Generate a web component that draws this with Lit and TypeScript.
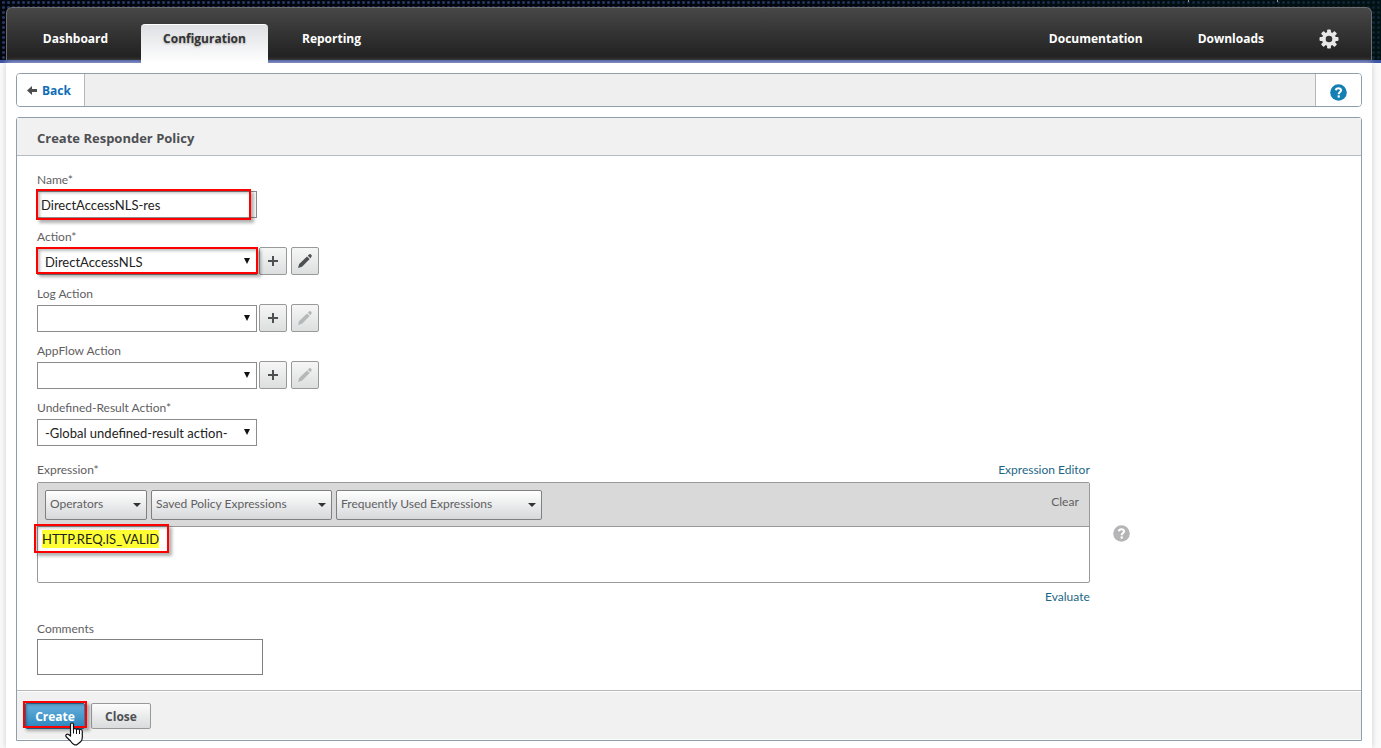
import { LitElement, html, css, svg, nothing } from "lit";
import { customElement, state } from "lit/decorators.js";

const plusIcon = html`<svg width="12" height="12" viewBox="0 0 12 12" aria-hidden="true"><path d="M5 1h2v4h4v2H7v4H5V7H1V5h4z" fill="#4d4f53" /></svg>`;
const pencilIcon = html`<svg width="16" height="16" viewBox="0 0 16 16" aria-hidden="true"><path d="M1 15l1.200-4L10 3.400l2.700 2.700L5 13.800z" fill="currentColor" /><path d="M10.800 2.700l1.200-1.100q1.100-1 2.200.1t.1 2.200L13.400 5.200z" fill="currentColor" /></svg>`;
const gearIcon = html`<svg width="20" height="20" viewBox="-10 -10 20 20" aria-hidden="true">
  <g fill="#e8e8e8">${[0, 45, 90, 135].map((a) => svg`<rect x="-1.900" y="-9.500" width="3.800" height="19" rx=".8" transform="rotate(${a})" />`)}<circle r="7" /></g>
  <circle r="3.300" fill="#333" />
</svg>`;
const helpIcon = html`<svg width="17" height="17" viewBox="0 0 17 17" aria-hidden="true">
  <circle cx="8.500" cy="8.500" r="8.300" fill="currentColor" />
  <path d="M5.800 6.200Q6.200 4.200 8.500 4.200T11.100 6.300C11.100 8 8.700 8.100 8.700 10.200" fill="none" stroke="#fff" stroke-width="2.100" />
  <rect x="7.600" y="11.400" width="2.200" height="2.200" fill="#fff" />
</svg>`;
const backIcon = html`<svg width="10" height="10" viewBox="0 0 10 10" aria-hidden="true"><path d="M0 4.500L5 0v3h5v3H5v3z" fill="#4d4d4d" /></svg>`;
const handIcon = html`<svg class="cursor" width="19" height="24" viewBox="0 0 19 24" aria-hidden="true">
  <path d="M5.500 2.500a1.500 1.500 0 0 1 3 0V7.500q0-1 1.400-1t1.600 1.400q0-1 1.500-1t1.500 1.400q0-.8 1.300-.8t1.500 1.700V15.500q0 2.500-1.500 4t-4 3.300H9.500Q7 21.500 5.500 19L1.400 15q-1.200-1.800 0-2.600t2.600.3l1.500 1.300z" fill="#fff" stroke="#111" stroke-width="1.200" stroke-linejoin="round" />
  <path d="M8.500 7v4.500M11.500 8V12M14.500 8.500V12" stroke="#111" fill="none" />
</svg>`;

interface Field {
  id: string;
  label: string;
  value: string;
  tools: boolean;
  editable?: boolean;
  marked?: boolean;
}

@customElement("app-root")
export class AppRoot extends LitElement {
  static styles = css`
    :host {
      display: block;
      min-height: 100vh;
      background: #fafafa;
      color: #5f6062;
      font: 12px/18px Lato, "Open Sans", sans-serif;
    }
    *, *::before, *::after { box-sizing: border-box; }
    svg { display: block; flex: none; }
    a { color: #1c6785; text-decoration: none; }
    button, input, select, textarea { font: inherit; margin: 0; }
    .top {
      padding: 7px 9px 0 6px;
      border-bottom: 3px solid #3c53a6;
      background-color: #04060d;
      background-clip: padding-box, padding-box, padding-box, padding-box;
      background-image:
        linear-gradient(#999, #999),
        linear-gradient(#999, #999),
        linear-gradient(90deg, rgba(4, 6, 13, 0) 50%, rgba(0, 24, 22, 0.6)),
        radial-gradient(circle, #22365f 1px, transparent 2px);
      background-position: right 192px top, right 103px top, 0 0, 1px 0;
      background-size: 1px 2px, 1px 2px, auto, 5px 5px;
      background-repeat: no-repeat, no-repeat, no-repeat, repeat;
    }
    .nav {
      display: flex;
      height: 53px;
      padding: 0 32px 0 5px;
      border: 1px solid #6e6e6e;
      border-bottom: 0;
      border-radius: 6px 6px 0 0;
      background: linear-gradient(#474747, #1f1f1f);
      align-items: flex-end;
    }
    .tab, .links a, .title, .back, .btn { font-family: "Open Sans", sans-serif; font-weight: 700; }
    .tab {
      height: 36px;
      padding-top: 6px;
      width: 127px;
      text-align: center;
      color: #fff;
      font-size: 12px;
    }
    .tab.active {
      height: 39px;
      margin: 0 0 -3px 2px;
      padding-top: 5px;
      border-radius: 4px 4px 0 0;
      color: #333;
      background: linear-gradient(#dfe0e4, #fff);
      border-top: 1px solid #fff;
      text-shadow: 0 1px 2px #aaa;
    }
    .spacer { flex: 1; }
    .links { display: flex; gap: 55px; align-items: center; height: 36px; padding-bottom: 6px; }
    .links a { color: #fff; }
    .icon-btn { border: 0; padding: 0; background: none; }
    .page {
      margin: 0 9px 0 6px;
      padding: 10px 10px 7px;
      background: #fff;
      box-shadow: 0 0 6px #ccc;
    }
    .crumbs {
      display: flex;
      height: 34px;
      border: 1px solid #909daa;
      border-radius: 4px;
      background: #efefef;
      overflow: hidden;
    }
    .back {
      display: flex;
      align-items: center;
      gap: 5px;
      width: 68px;
      padding: 2px 0 0 10px;
      background: #fff;
      border-right: 1px solid #b8b8b8;
      color: #0f6db8;
    }
    .help {
      width: 46px;
      background: #fff;
      border: 0;
      border-left: 1px solid #b8b8b8;
      color: #147fb3;
      display: flex;
      align-items: center;
      justify-content: center;
      padding: 4px 0 0;
    }
    .panel { margin-top: 10px; border: 1px solid #909daa; border-radius: 3px 3px 0 0; }
    .title {
      margin: 0;
      height: 38px;
      padding: 0 20px;
      font-size: 13px;
      line-height: 41px;
      color: #4d4f53;
      background: #f1f1f1;
      border-bottom: 1px solid #b5bbc0;
    }
    .form { padding: 15px 8px 15px 20px; }
    .field { margin-bottom: 10px; }
    .field label, .label { display: block; height: 18px; margin-bottom: 1px; }
    .row { display: flex; align-items: flex-end; gap: 4px; height: 28px; }
    .control { position: relative; width: 220px; height: 27px; }
    .control select, .control input {
      width: 100%;
      height: 100%;
      border: 1px solid #8c8c8c;
      border-radius: 0;
      color: #222;
      background: #fff;
      font-size: 13px;
      appearance: none;
    }
    .control input { padding: 0 3px; }
    .control select { padding: 1px 7px 0; }
    .arrow::after {
      content: "";
      position: absolute;
      right: 7px;
      top: 10px;
      border: 3px solid transparent;
      border-top: 6px solid #111;
      border-bottom: 0;
      pointer-events: none;
    }
    .mini {
      display: flex;
      align-items: center;
      justify-content: center;
      width: 28px;
      height: 28px;
      padding: 0;
      border: 1px solid #999;
      border-radius: 2px;
      background: linear-gradient(#f6f6f6, #dcdfdf);
      color: #4d4f53;
    }
    .mini:disabled { color: #b5b7b9; }
    .tools { display: flex; gap: 4px; margin-left: -2px; }
    .mark {
      position: absolute;
      border: 2px solid #f00;
      box-shadow: 3px 3px 3px rgba(0, 0, 0, 0.3), inset 2px 2px 3px rgba(0, 0, 0, 0.25);
      pointer-events: none;
    }
    .mark.name { inset: -2px 6px -2px -1px; }
    .mark.action { inset: -1px -1px 1px -1px; }
    .mark.expr { left: -3px; top: 42px; width: 135px; height: 29px; }
    .mark.create { inset: -2px -2px 1px; }
    .expression { width: 80%; margin-top: 15px; }
    .between { display: flex; justify-content: space-between; margin-bottom: 3px; }
    .editor-row { position: relative; }
    .editor { border: 1px solid #999; border-radius: 2px; }
    .bar {
      display: flex;
      align-items: flex-start;
      gap: 4px;
      height: 44px;
      padding: 7px;
      background: #d9d9d9;
      border-bottom: 1px solid #999;
    }
    .pick { position: relative; }
    .pick select {
      width: 100%;
      height: 30px;
      padding: 0 4px 2px;
      border: 1px solid #808080;
      border-radius: 2px;
      color: #5f6062;
      background: linear-gradient(#fff, #d6d8da);
      appearance: none;
    }
    .pick::after {
      content: "";
      position: absolute;
      right: 6px;
      top: 13px;
      border: 4px solid transparent;
      border-top: 4px solid #333;
      border-bottom: 0;
      pointer-events: none;
    }
    .operators { width: 102px; }
    .saved { width: 181px; }
    .frequent { width: 206px; }
    .clear { margin-left: auto; padding: 3px 3px 0 0; color: #5f6062; }
    .editor textarea {
      display: block;
      width: 100%;
      height: 55px;
      padding: 3px 4px;
      border: 0;
      resize: none;
      outline: 0;
      color: #222;
      font-size: 13px;
      background: linear-gradient(#ff3, #ff3) 4px 3px / 117px 18px no-repeat;
    }
    .hint { position: absolute; left: 100%; top: 43px; margin-left: 23px; color: #b5b5b7; }
    .evaluate { display: block; text-align: right; margin: 5px 0 14px; }
    .comments { display: block; width: 226px; height: 36px; border: 1px solid #808080; resize: none; padding: 4px; }
    .foot {
      display: flex;
      gap: 6px;
      height: 50px;
      padding: 12px 8px 11px;
      border-top: 1px solid #b5b8ba;
      background: #f1f1f1;
      box-shadow: inset 0 1px #fff, inset 0 -1px #fff;
    }
    .btn {
      width: 60px;
      height: 26px;
      padding: 2px 0 0;
      border: 1px solid #999;
      border-radius: 2px;
      background: linear-gradient(#fcfcfc, #d9dbdc);
      color: #4d4f53;
    }
    .btn.primary { border-color: #2a7dab; background: linear-gradient(#67b0dc, #2a86bd); color: #fff; }
    .wrap { position: relative; height: 26px; }
    .cursor { position: absolute; left: 40px; top: 19px; }
  `;

  @state() private fields: Field[] = [
    { id: "action", label: "Action*", value: "DirectAccessNLS", tools: true, editable: true, marked: true },
    { id: "log", label: "Log Action", value: "", tools: true },
    { id: "appflow", label: "AppFlow Action", value: "", tools: true },
    { id: "undefined", label: "Undefined-Result Action*", value: "-Global undefined-result action-", tools: false },
  ];

  private renderField(f: Field) {
    return html`<div class="field">
      <label for=${f.id}>${f.label}</label>
      <div class="row">
        <div class="control arrow">
          <select id=${f.id}><option>${f.value}</option></select>
          ${f.marked ? html`<span class="mark action"></span>` : nothing}
        </div>
        ${f.tools
          ? html`<div class="tools">
              <button class="mini" aria-label="Add">${plusIcon}</button>
              <button class="mini" aria-label="Edit" ?disabled=${!f.editable}>${pencilIcon}</button>
            </div>`
          : nothing}
      </div>
    </div>`;
  }

  private renderPick(name: string, label: string) {
    return html`<div class="pick ${name}"><select aria-label=${label}><option>${label}</option></select></div>`;
  }

  render() {
    return html`
      <header class="top">
        <nav class="nav">
          <a class="tab" href="#dashboard">Dashboard</a>
          <a class="tab active" href="#configuration">Configuration</a>
          <a class="tab" href="#reporting">Reporting</a>
          <span class="spacer"></span>
          <div class="links">
            <a href="#documentation">Documentation</a>
            <a href="#downloads">Downloads</a>
            <button class="icon-btn" aria-label="Settings">${gearIcon}</button>
          </div>
        </nav>
      </header>
      <main class="page">
        <div class="crumbs">
          <a class="back" href="#back">${backIcon}Back</a>
          <span class="spacer"></span>
          <button class="help" aria-label="Help">${helpIcon}</button>
        </div>
        <section class="panel">
          <h1 class="title">Create Responder Policy</h1>
          <div class="form">
            <div class="field">
              <label for="name">Name*</label>
              <div class="row">
                <div class="control"><input id="name" type="text" .value=${"DirectAccessNLS-res"} /><span class="mark name"></span></div>
              </div>
            </div>
            ${this.fields.map((f) => this.renderField(f))}
            <div class="expression">
              <div class="between"><label for="expr">Expression*</label><a href="#editor">Expression Editor</a></div>
              <div class="editor-row">
                <div class="editor">
                  <div class="bar">
                    ${this.renderPick("operators", "Operators")}
                    ${this.renderPick("saved", "Saved Policy Expressions")}
                    ${this.renderPick("frequent", "Frequently Used Expressions")}
                    <a class="clear" href="#clear">Clear</a>
                  </div>
                  <textarea id="expr" spellcheck="false" .value=${"HTTP.REQ.IS_VALID"}></textarea>
                </div>
                <span class="mark expr"></span>
                <button class="icon-btn hint" aria-label="Expression help">${helpIcon}</button>
              </div>
              <a class="evaluate" href="#evaluate">Evaluate</a>
            </div>
            <label class="label" for="comments">Comments</label>
            <textarea class="comments" id="comments"></textarea>
          </div>
          <div class="foot">
            <div class="wrap">
              <button class="btn primary">Create</button>
              <span class="mark create"></span>
              ${handIcon}
            </div>
            <button class="btn">Close</button>
          </div>
        </section>
      </main>
    `;
  }
}
